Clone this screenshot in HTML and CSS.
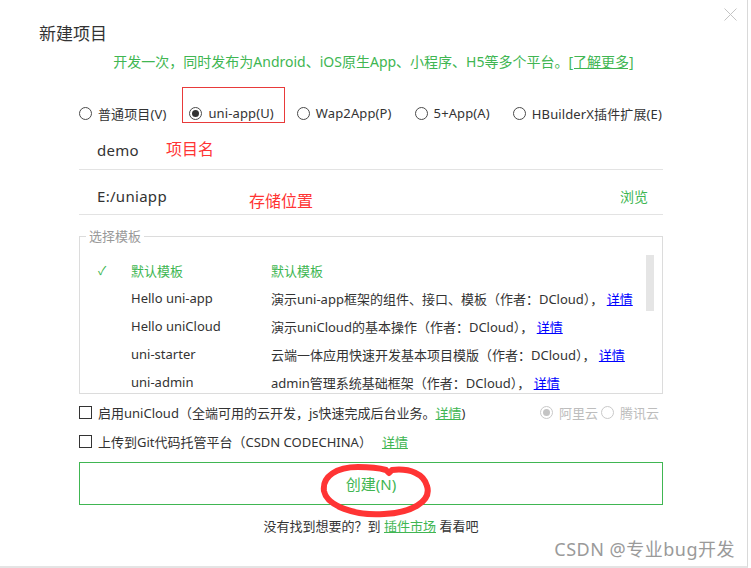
FILE: index.html
```html
<!DOCTYPE html>
<html lang="zh-CN">
<head>
<meta charset="utf-8">
<title>新建项目</title>
<link rel="stylesheet" href="styles.css">
</head>
<body>
<div class="dialog">
  <button class="close" aria-label="关闭">
    <svg width="13" height="13" viewBox="0 0 13 13"><path d="M0.5 0.5 L12.5 12.5 M12.5 0.5 L0.5 12.5" stroke="#c4c4c4" stroke-width="1" fill="none"/></svg>
  </button>
  <h1 class="title">新建项目</h1>
  <p class="intro">开发一次，同时发布为Android、iOS原生App、小程序、H5等多个平台。<a class="green-link">[了解更多]</a></p>

  <div class="content">
    <div class="types">
      <label class="opt"><span class="radio"></span><span>普通项目(V)</span></label>
      <label class="opt marked"><span class="radio checked"></span><span>uni-app(U)</span></label>
      <label class="opt"><span class="radio"></span><span>Wap2App(P)</span></label>
      <label class="opt"><span class="radio"></span><span>5+App(A)</span></label>
      <label class="opt"><span class="radio"></span><span>HBuilderX插件扩展(E)</span></label>
    </div>

    <div class="field field-name">
      <span class="value">demo</span>
      <span class="note note-name">项目名</span>
    </div>
    <div class="field field-path">
      <span class="value">E:/uniapp</span>
      <span class="note note-path">存储位置</span>
      <a class="browse">浏览</a>
    </div>

    <fieldset class="templates">
      <legend>选择模板</legend>
      <div class="list">
        <div class="row selected"><span class="check">✓</span><span class="name">默认模板</span><span class="desc">默认模板</span></div>
        <div class="row"><span class="check"></span><span class="name">Hello uni-app</span><span class="desc">演示uni-app框架的组件、接口、模板（作者：DCloud）， <a class="blue-link">详情</a></span></div>
        <div class="row"><span class="check"></span><span class="name">Hello uniCloud</span><span class="desc">演示uniCloud的基本操作（作者：DCloud）， <a class="blue-link">详情</a></span></div>
        <div class="row"><span class="check"></span><span class="name">uni-starter</span><span class="desc">云端一体应用快速开发基本项目模版（作者：DCloud）， <a class="blue-link">详情</a></span></div>
        <div class="row"><span class="check"></span><span class="name">uni-admin</span><span class="desc">admin管理系统基础框架（作者：DCloud）， <a class="blue-link">详情</a></span></div>
        <div class="scrollbar"></div>
      </div>
    </fieldset>

    <div class="opt-row first">
      <label class="cb-label"><span class="checkbox"></span><span>启用uniCloud（全端可用的云开发，js快速完成后台业务。<a class="green-link">详情</a>)</span></label>
      <div class="cloud">
        <span class="radio disabled checked"></span><span class="cloud-name">阿里云</span>
        <span class="radio disabled"></span><span class="cloud-name">腾讯云</span>
      </div>
    </div>
    <div class="opt-row">
      <label class="cb-label"><span class="checkbox"></span><span>上传到Git代码托管平台（CSDN CODECHINA）<a class="green-link spaced">详情</a></span></label>
    </div>

    <button class="create">创建(N)</button>
    <p class="more">没有找到想要的？到 <a class="green-link">插件市场</a> 看看吧</p>
  </div>

  <svg class="scribble" width="751" height="568" viewBox="0 0 751 568">
    <path d="M389 473 L392 470 C410 468 424 474 427 486 C432 502 410 513 384 514 C355 516 327 506 324 491 C322 476 337 467 358 467 C370 467 379 468 386 470 L389 473" fill="none" stroke="#ff3434" stroke-width="6" stroke-linecap="round" stroke-linejoin="round"/>
  </svg>
  <div class="watermark">CSDN @专业bug开发</div>
</div>
</body>
</html>
```

FILE: styles.css
```css
* { box-sizing: border-box; }

html, body {
  margin: 0;
  padding: 0;
  background: #ffffff;
}

body {
  font-family: "Noto Sans", "Noto Sans CJK SC", sans-serif;
  color: #333333;
  font-size: 13px;
}

.dialog {
  position: relative;
  width: 748px;
  height: 568px;
  padding-top: 22px;
  background: #ffffff;
  border-right: 1px solid #d9d9d9;
  border-bottom: 2px solid #e4e4e4;
  overflow: hidden;
}

.close {
  position: absolute;
  top: 8px;
  right: 10px;
  width: 13px;
  height: 13px;
  padding: 0;
  border: 0;
  background: transparent;
  display: flex;
}

.title {
  margin: 0;
  padding-left: 39px;
  font-size: 17px;
  line-height: 24px;
  font-weight: normal;
  color: #333333;
}

.intro {
  margin: 6px 0 0;
  font-size: 14px;
  line-height: 20px;
  text-align: center;
  color: #40b652;
}

.green-link {
  color: #40b652;
  text-decoration: underline;
}

.blue-link {
  color: #0000ff;
  text-decoration: underline;
}

.content {
  margin-left: 79px;
  width: 584px;
}

/* project types */
.types {
  margin-top: 23px;
  height: 36px;
  display: flex;
  align-items: center;
  gap: 23px;
}

.opt {
  position: relative;
  display: flex;
  align-items: center;
  gap: 6px;
  font-size: 13px;
  letter-spacing: 0.12px;
  color: #333333;
  white-space: nowrap;
}

.opt.marked::after {
  content: "";
  position: absolute;
  left: -7px;
  right: -11px;
  top: -17px;
  height: 34px;
  border: 1px solid #e83a3a;
}

.radio {
  display: inline-flex;
  align-items: center;
  justify-content: center;
  width: 13px;
  height: 13px;
  border: 1px solid #4a4a4a;
  border-radius: 50%;
  flex: none;
}

.radio.checked::before {
  content: "";
  width: 7px;
  height: 7px;
  border-radius: 50%;
  background: #333333;
}

.radio.disabled {
  border-color: #c9c9c9;
}

.radio.disabled.checked::before {
  background: #c4c4c4;
}

/* fields */
.field {
  display: flex;
  align-items: center;
  border-bottom: 1px solid #e3e3e3;
  padding-left: 18px;
  font-size: 15px;
}

.field-name {
  height: 39px;
}

.field-path {
  height: 45px;
  padding-top: 8px;
}

.value {
  color: #333333;
  letter-spacing: 0.3px;
}

.note {
  color: #ff3434;
  font-size: 16px;
}

.note-name {
  margin-left: 27px;
  padding-bottom: 4px;
}

.note-path {
  margin-left: 82px;
  padding-top: 8px;
}

.browse {
  margin-left: auto;
  margin-right: 15px;
  font-size: 14px;
  color: #40b652;
}

/* templates */
.templates {
  margin: 12px 0 0;
  padding: 0;
  border: 1px solid #dcdcdc;
  min-width: 0;
}

.templates legend {
  margin-left: 6px;
  padding: 0 3px;
  font-size: 13px;
  line-height: 18px;
  color: #999999;
}

.list {
  position: relative;
  height: 148px;
  padding: 11px 0 0 18px;
  overflow: hidden;
}

.row {
  display: flex;
  align-items: center;
  height: 28px;
  font-size: 13px;
  white-space: nowrap;
  color: #333333;
}

.row.selected {
  color: #40b652;
}

.check {
  width: 33px;
  flex: none;
  color: #40b652;
  font-size: 12px;
}

.name {
  width: 140px;
  flex: none;
}

.scrollbar {
  position: absolute;
  top: 10px;
  right: 8px;
  width: 8px;
  height: 56px;
  background: #e5e5e5;
}

/* options */
.opt-row {
  height: 29px;
  display: flex;
  align-items: center;
  font-size: 13px;
}

.opt-row.first {
  margin-top: 4px;
}

.cb-label {
  display: flex;
  align-items: center;
  gap: 6px;
  white-space: nowrap;
}

.checkbox {
  width: 13px;
  height: 13px;
  border: 1px solid #333333;
  flex: none;
}

.spaced {
  margin-left: 10px;
}

.cloud {
  margin-left: auto;
  margin-right: 4px;
  display: flex;
  align-items: center;
  color: #bdbdbd;
}

.cloud-name {
  margin-left: 6px;
}

.cloud-name + .radio {
  margin-left: 3px;
}

/* create */
.create {
  display: block;
  width: 100%;
  height: 43px;
  margin-top: 6px;
  border: 1px solid #40b652;
  background: #ffffff;
  color: #40b652;
  font-family: inherit;
  font-size: 15px;
  padding: 0;
}

.more {
  margin: 11px 0 0;
  line-height: 20px;
  text-align: center;
  font-size: 13px;
  color: #333333;
}

.scribble {
  position: absolute;
  left: 0;
  top: 0;
  pointer-events: none;
}

.watermark {
  position: absolute;
  right: 12px;
  bottom: 6px;
  font-size: 18px;
  line-height: 22px;
  color: #9a9a9a;
  letter-spacing: 0.5px;
}
```
